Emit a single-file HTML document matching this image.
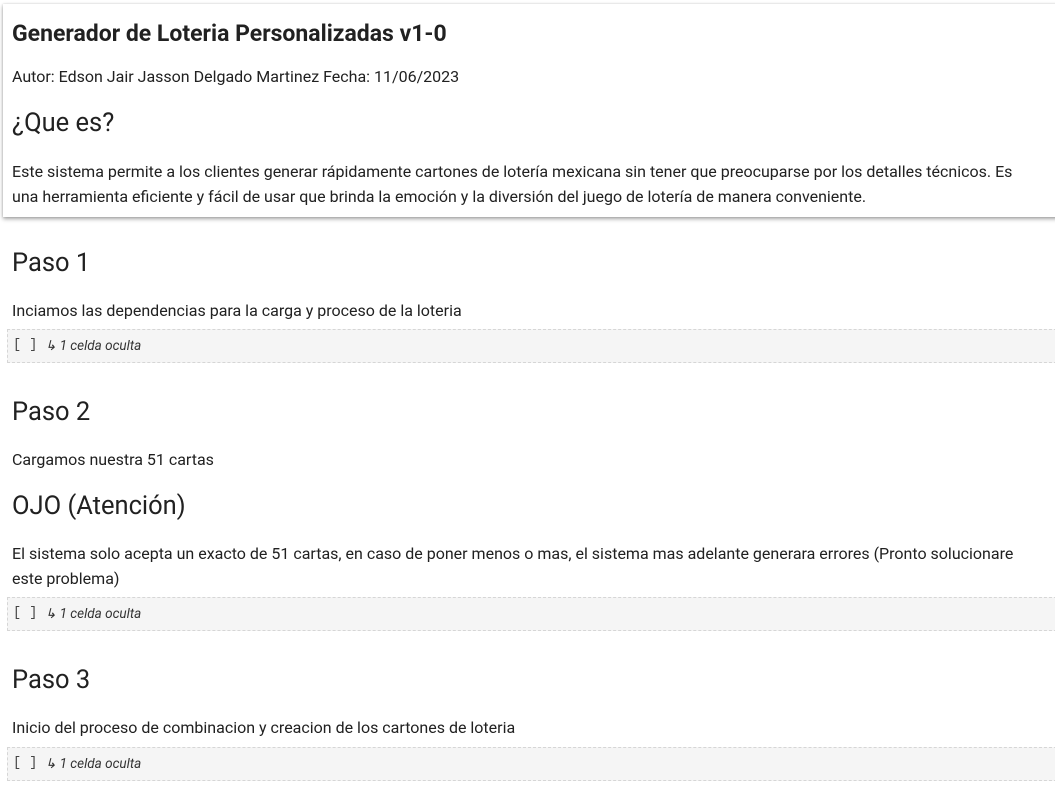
<!DOCTYPE html>
<html><head><meta charset="utf-8"><style>
body{margin:0;width:1055px;height:794px;background:#fff;font-family:Roboto,"Liberation Sans",sans-serif;color:#212121;position:relative;overflow:hidden}
.a{position:absolute;left:12px;white-space:nowrap}
.card{position:absolute;left:3px;top:4px;width:1060px;height:213px;background:#fff;box-shadow:0 2px 4px rgba(0,0,0,.35),0 0 2px rgba(0,0,0,.15)}
h1{font-size:23px;font-weight:bold;margin:0}
.h{font-size:25.5px;font-weight:normal}
.p{font-size:16px}
.box{position:absolute;left:7px;width:1060px;height:34px;background:#f5f5f5;border:1px dashed #d6d6d6;box-sizing:border-box}
.box span{position:absolute;top:8px;font-size:13.5px}
.br{left:5px;font-family:"Liberation Mono",monospace;color:#444}
.it{left:37px;font-style:italic;color:#333}
</style></head><body>
<div class="card"></div>
<div class="a" style="top:20px"><h1>Generador de Loteria Personalizadas v1-0</h1></div>
<div class="a p" style="top:67px">Autor: Edson Jair Jasson Delgado Martinez Fecha: 11/06/2023</div>
<div class="a h" style="top:108px">¿Que es?</div>
<div class="a p" style="top:159px;line-height:25px;white-space:normal;width:1020px">Este sistema permite a los clientes generar rápidamente cartones de lotería mexicana sin tener que preocuparse por los detalles técnicos. Es una herramienta eficiente y fácil de usar que brinda la emoción y la diversión del juego de lotería de manera conveniente.</div>
<div class="a h" style="top:248px">Paso 1</div>
<div class="a p" style="top:301px">Inciamos las dependencias para la carga y proceso de la loteria</div>
<div class="box" style="top:329px"><span class="br">[ ]</span><span class="it">↳ 1 celda oculta</span></div>
<div class="a h" style="top:397px">Paso 2</div>
<div class="a p" style="top:450px">Cargamos nuestra 51 cartas</div>
<div class="a h" style="top:491px">OJO (Atención)</div>
<div class="a p" style="top:541px;line-height:25px;white-space:normal;width:1030px">El sistema solo acepta un exacto de 51 cartas, en caso de poner menos o mas, el sistema mas adelante generara errores (Pronto solucionare este problema)</div>
<div class="box" style="top:597px"><span class="br">[ ]</span><span class="it">↳ 1 celda oculta</span></div>
<div class="a h" style="top:665px">Paso 3</div>
<div class="a p" style="top:718px">Inicio del proceso de combinacion y creacion de los cartones de loteria</div>
<div class="box" style="top:747px"><span class="br">[ ]</span><span class="it">↳ 1 celda oculta</span></div>
</body></html>
